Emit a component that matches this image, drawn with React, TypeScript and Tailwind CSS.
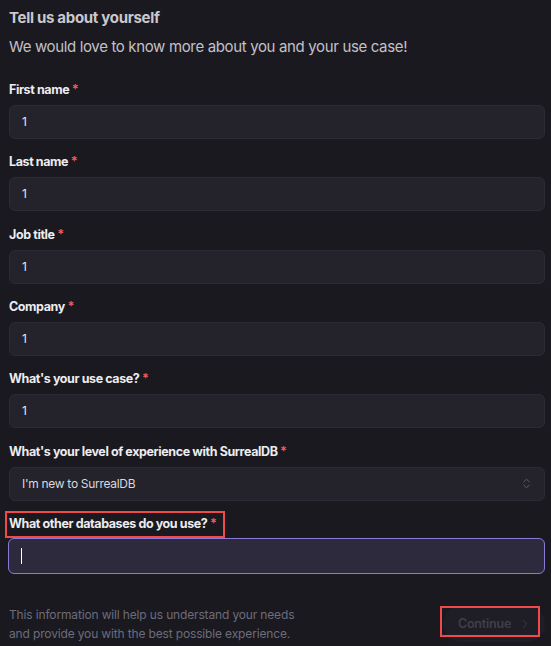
import { ChevronRight, ChevronsUpDown } from "lucide-react";

const fields = [
  "First name",
  "Last name",
  "Job title",
  "Company",
  "What's your use case?",
];

function Label({ text }: { text: string }) {
  return (
    <div className="h-4 text-[12.5px] leading-4 font-bold tracking-[-0.4px] text-[#ececef]">
      {text} <span className="text-[#f2575b]">*</span>
    </div>
  );
}

export default function App() {
  return (
    <div
      className="min-h-[646px] w-full bg-[#1a1920] pl-[9px] pr-[6px] pt-[8px] text-[#e5e5ea]"
      style={{ fontFamily: "Inter, 'Noto Sans', sans-serif" }}
    >
      <h1 className="text-[15px] leading-5 font-bold tracking-[-0.3px] text-[#c9c8ce]">
        Tell us about yourself
      </h1>
      <p className="mt-[7px] text-[15px] leading-6 tracking-[-0.35px] text-[#c2c1c8]">
        We would love to know more about you and your use case!
      </p>

      <div className="mt-[23px] flex flex-col gap-[15.33px]">
        {fields.map((f) => (
          <div key={f} className="flex flex-col gap-[7px]">
            <Label text={f} />
            <div className="flex h-[34px] items-center rounded-md border border-[#2c2b35] bg-[#24232b] px-3 text-[12px] tracking-[-0.3px] text-[#e8e8ec]">
              1
            </div>
          </div>
        ))}

        <div className="flex flex-col gap-[7px]">
          <Label text="What's your level of experience with SurrealDB" />
          <div className="flex h-[34px] items-center justify-between rounded-md border border-[#2c2b35] bg-[#24232b] pl-3 pr-[11px] text-[12px] tracking-[-0.3px] text-[#d8d8dd]">
            <span>I'm new to SurrealDB</span>
            <ChevronsUpDown size={13} strokeWidth={1.5} className="text-[#6c6b76]" />
          </div>
        </div>

        <div className="flex flex-col gap-[6px]">
          <div className="relative">
            <Label text="What other databases do you use?" />
            <div className="absolute -top-[5px] -left-[4px] h-[27px] w-[220px] border-2 border-[#f04a4a]" />
          </div>
          <div className="-ml-px flex h-[36px] items-center rounded-md border border-[#8c79d6] bg-[#2c2a3c] px-3">
            <span className="h-[16px] w-px bg-white" />
          </div>
        </div>
      </div>

      <div className="mt-[31px] flex items-start justify-between">
        <p className="text-[12px] leading-[19px] tracking-[-0.15px] text-[#6d6c7b]">
          This information will help us understand your needs
          <br />
          and provide you with the best possible experience.
        </p>
        <div className="relative mt-[1px]">
          <button className="flex h-[36px] w-[102px] items-center justify-center gap-[7px] rounded-full bg-[#1f1e26] pl-[2px] text-[12.5px] font-semibold tracking-[-0.2px] text-[#403f4a]">
            Continue
            <ChevronRight size={14} strokeWidth={1.5} />
          </button>
          <div className="absolute top-0 -left-[3px] h-[31px] w-[100px] border-2 border-[#f04a4a]" />
        </div>
      </div>
    </div>
  );
}
